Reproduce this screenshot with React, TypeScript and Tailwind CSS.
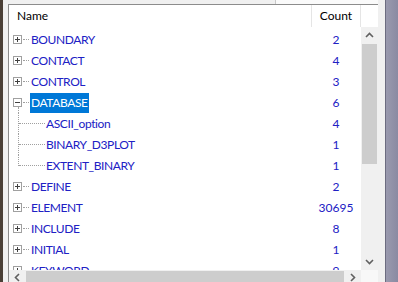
import React from 'react'

type Row = { name: string; count: string; level: 0 | 1; state?: 'plus' | 'minus'; selected?: boolean; last?: boolean }

const rows: Row[] = [
  { name: 'BOUNDARY', count: '2', level: 0, state: 'plus' },
  { name: 'CONTACT', count: '4', level: 0, state: 'plus' },
  { name: 'CONTROL', count: '3', level: 0, state: 'plus' },
  { name: 'DATABASE', count: '6', level: 0, state: 'minus', selected: true },
  { name: 'ASCII_option', count: '4', level: 1 },
  { name: 'BINARY_D3PLOT', count: '1', level: 1 },
  { name: 'EXTENT_BINARY', count: '1', level: 1, last: true },
  { name: 'DEFINE', count: '2', level: 0, state: 'plus' },
  { name: 'ELEMENT', count: '30695', level: 0, state: 'plus' },
  { name: 'INCLUDE', count: '8', level: 0, state: 'plus' },
  { name: 'INITIAL', count: '1', level: 0, state: 'plus' },
  { name: 'KEYWORD', count: '9', level: 0, state: 'plus' },
]

function ExpandBox({ minus }: { minus?: boolean }) {
  return (
    <div className="relative h-[9px] w-[9px] border border-[#a0a0a0] bg-white">
      <div className="absolute left-[1px] top-[3px] h-px w-[5px] bg-[#404040]" />
      {!minus && <div className="absolute left-[3px] top-[1px] h-[5px] w-px bg-[#404040]" />}
    </div>
  )
}

function Chevron({ dir }: { dir: 'up' | 'down' | 'left' | 'right' }) {
  const pts = {
    up: '1,6 4.5,2.5 8,6',
    down: '1,3 4.5,6.5 8,3',
    left: '6,1 2.5,4.5 6,8',
    right: '3,1 6.5,4.5 3,8',
  }[dir]
  return (
    <svg width="9" height="9" viewBox="0 0 9 9">
      <polyline points={pts} fill="none" stroke="#606060" strokeWidth="1.6" />
    </svg>
  )
}

export default function App() {
  return (
    <div className="flex h-[282px] w-[398px] overflow-hidden bg-[#f0f0f0] text-[12px]" style={{ fontFamily: 'Lato, "Liberation Sans", sans-serif' }}>
      <div className="w-[3px] bg-[#4a3f36]" />
      <div className="flex w-[375px] flex-col pl-[5px]">
        <div className="flex h-[4px] justify-end">
          <div className="w-[103px] border-l border-[#c8c8c8] bg-[#fafafa]" />
        </div>
        <div className="flex flex-1 flex-col overflow-hidden border-l border-t border-[#8c8c8c] bg-white">
          {/* header */}
          <div className="flex h-[22px] shrink-0 items-center text-black">
            <div className="w-[302px] pl-[8px]">Name</div>
            <div className="flex h-full w-[50px] items-center justify-center border-l border-r border-[#e5e5e5]">Count</div>
            <div className="flex-1" />
          </div>
          <div className="flex min-h-0 flex-1">
            <div className="relative flex min-w-0 flex-1 flex-col overflow-hidden">
              <div className="flex flex-col pt-[2px]">
                {rows.map((r) => (
                  <div key={r.name} className="flex h-[21px] shrink-0 items-center text-[#2020c4]">
                    <div className="relative flex w-[302px] items-center self-stretch tracking-[-0.4px]">
                      {r.level === 0 ? (
                        <>
                          <div className="ml-[4px] flex items-center">
                            <ExpandBox minus={r.state === 'minus'} />
                            <div className="ml-[1px] w-[6px] border-t border-dotted border-[#a0a0a0]" />
                          </div>
                          {r.state === 'minus' && (
                            <div className="absolute left-[9px] top-[15px] h-[6px] border-l border-dotted border-[#a0a0a0]" />
                          )}
                          <span className={r.selected ? 'ml-px bg-[#0078d7] px-px leading-[20px] text-white' : 'ml-[2px]'}>{r.name}</span>
                        </>
                      ) : (
                        <>
                          <div className={`absolute left-[9px] top-0 border-l border-dotted border-[#a0a0a0] ${r.last ? 'h-[11px]' : 'h-full'}`} />
                          <div className="ml-[10px] w-[26px] border-t border-dotted border-[#a0a0a0]" />
                          <span className="ml-px">{r.name}</span>
                        </>
                      )}
                    </div>
                    <div className="w-[50px] text-center">{r.count}</div>
                  </div>
                ))}
              </div>
            </div>
            {/* vertical scrollbar */}
            <div className="flex w-[17px] shrink-0 flex-col bg-[#f0f0f0]">
              <div className="flex h-[17px] items-center justify-center"><Chevron dir="up" /></div>
              <div className="h-[120px] mx-[1px] bg-[#cdcdcd]" />
              <div className="flex-1" />
              <div className="flex h-[17px] items-center justify-center"><Chevron dir="down" /></div>
            </div>
          </div>
          {/* horizontal scrollbar */}
          <div className="flex h-[12px] shrink-0">
            <div className="flex w-[352px] bg-[#f0f0f0]">
              <div className="flex w-[17px] items-center justify-center pt-[3px]"><Chevron dir="left" /></div>
              <div className="my-[1px] mb-0 w-[318px] bg-[#cdcdcd]" />
              <div className="flex flex-1 items-center justify-center pt-[3px]"><Chevron dir="right" /></div>
            </div>
            <div className="flex-1 bg-[#f8f8f8]" />
          </div>
        </div>
      </div>
      <div className="w-[7px] bg-[#f0f0f0]" />
      <div className="w-px bg-[#6c6c80]" />
      <div className="flex-1 bg-gradient-to-r from-[#9a9aae] to-[#8a8aa2]" />
    </div>
  )
}
